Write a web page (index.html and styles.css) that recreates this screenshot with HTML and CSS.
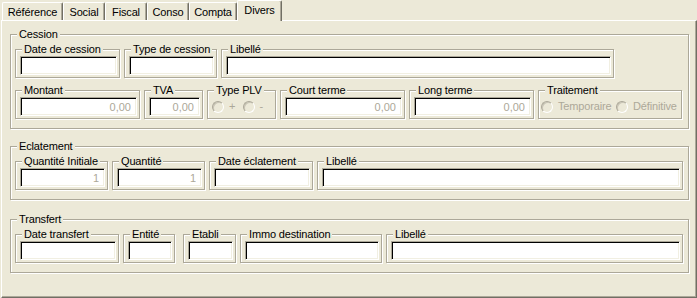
FILE: index.html
```html
<!DOCTYPE html>
<html lang="fr">
<head>
    <meta charset="UTF-8">
    <title>Divers</title>
    <link rel="stylesheet" href="styles.css">
</head>
<body>

    <!-- Tab strip -->
    <div class="tabs">
        <div class="tab t-ref">Référence</div>
        <div class="tab t-social">Social</div>
        <div class="tab t-fiscal">Fiscal</div>
        <div class="tab t-conso">Conso</div>
        <div class="tab t-compta">Compta</div>
        <div class="tab t-divers active">Divers</div>
    </div>

    <div class="panel">
        <!-- Cession -->
        <fieldset class="group">
            <legend>Cession</legend>
            <div class="row">
                <fieldset class="field w-date-cession"><legend>Date de cession</legend><input class="edit" type="text"></fieldset>
                <fieldset class="field w-type-cession"><legend>Type de cession</legend><input class="edit" type="text"></fieldset>
                <fieldset class="field w-lib-cession"><legend>Libellé</legend><input class="edit" type="text"></fieldset>
            </div>
            <div class="row row-next">
                <fieldset class="field w-montant"><legend>Montant</legend><input class="edit num" type="text" value="0,00" disabled></fieldset>
                <fieldset class="field w-tva"><legend>TVA</legend><input class="edit num" type="text" value="0,00" disabled></fieldset>
                <fieldset class="field w-plv">
                    <legend>Type PLV</legend>
                    <div class="radios">
                        <span class="opt opt-plv"><span class="radio"></span>+</span>
                        <span class="opt opt-plv"><span class="radio"></span>-</span>
                    </div>
                </fieldset>
                <fieldset class="field w-court"><legend>Court terme</legend><input class="edit num" type="text" value="0,00" disabled></fieldset>
                <fieldset class="field w-long"><legend>Long terme</legend><input class="edit num" type="text" value="0,00" disabled></fieldset>
                <fieldset class="field w-traitement">
                    <legend>Traitement</legend>
                    <div class="radios traitement">
                        <span class="opt opt-temp"><span class="radio"></span>Temporaire</span>
                        <span class="opt"><span class="radio"></span>Définitive</span>
                    </div>
                </fieldset>
            </div>
        </fieldset>

        <!-- Eclatement -->
        <fieldset class="group g-eclat">
            <legend>Eclatement</legend>
            <div class="row">
                <fieldset class="field w-qte"><legend>Quantité Initiale</legend><input class="edit num" type="text" value="1" disabled></fieldset>
                <fieldset class="field w-qte"><legend>Quantité</legend><input class="edit num" type="text" value="1" disabled></fieldset>
                <fieldset class="field w-date-eclat"><legend>Date éclatement</legend><input class="edit" type="text"></fieldset>
                <fieldset class="field w-lib-eclat"><legend>Libellé</legend><input class="edit" type="text"></fieldset>
            </div>
        </fieldset>

        <!-- Transfert -->
        <fieldset class="group g-transfert">
            <legend>Transfert</legend>
            <div class="row">
                <fieldset class="field w-date-transfert"><legend>Date transfert</legend><input class="edit" type="text"></fieldset>
                <fieldset class="field w-entite"><legend>Entité</legend><input class="edit" type="text"></fieldset>
                <fieldset class="field w-etabli"><legend>Etabli</legend><input class="edit" type="text"></fieldset>
                <fieldset class="field w-immo"><legend>Immo destination</legend><input class="edit" type="text"></fieldset>
                <fieldset class="field w-lib-transfert"><legend>Libellé</legend><input class="edit" type="text"></fieldset>
            </div>
        </fieldset>
    </div>

</body>
</html>
```

FILE: styles.css
```css
body {
    margin: 0;
    background-color: #ECE9D8;
    font-family: "Liberation Sans", Arial, sans-serif;
    font-size: 11px;
    line-height: 13px;
    letter-spacing: -0.15px;
    color: #000;
}

/* Tab strip */
.tabs {
    display: flex;
    align-items: flex-end;
    height: 20px;
    padding-left: 2px;
}
.tab {
    box-sizing: border-box;
    height: 18px;
    padding-top: 3px;
    text-align: center;
    white-space: nowrap;
    border-left: 1px solid #fff;
    border-top: 1px solid #fff;
    border-right: 1px solid #716F64;
    box-shadow: inset -1px 0 #ACA899;
    border-radius: 2px 2px 0 0;
}
.tab.active {
    height: 21px;
    margin-bottom: -1px;
    position: relative;
    z-index: 1;
    background-color: #ECE9D8;
}
.t-ref { width: 61px; }
.t-social, .t-fiscal, .t-conso { width: 42px; }
.t-compta { width: 48px; }
.t-divers { width: 45px; }

/* Tab page */
.panel {
    box-sizing: border-box;
    margin-left: 1px;
    width: 696px;
    height: 278px;
    padding: 7px 7px 0 8px;
    border: 1px solid;
    border-color: #fff #716F64 #716F64 #fff;
    box-shadow: inset -1px -1px #ACA899;
}

/* Etched group boxes */
fieldset {
    margin: 0;
    min-width: 0;
    border: 1px solid #ACA899;
    box-shadow: inset 1px 1px #fff, 1px 1px #fff;
}
legend {
    margin-left: 2px;
    padding: 0 2px;
    line-height: 13px;
    white-space: nowrap;
    color: #000;
    background-color: #ECE9D8;
}
.group {
    padding: 2px 0 9px 4px;
}
.g-eclat { margin-top: 11px; }
.g-transfert { margin-top: 13px; }

.row {
    display: flex;
    gap: 4px;
}
.row-next { margin-top: 6px; }

.field {
    flex-shrink: 0;
    box-sizing: border-box;
    padding: 0 2px 2px 4px;
}

/* field widths */
.w-date-cession { width: 105px; }
.w-type-cession { width: 93px; }
.w-lib-cession { width: 393px; }
.w-montant { width: 125px; }
.w-tva { width: 59px; }
.w-plv { width: 69px; }
.w-court, .w-long { width: 125px; }
.w-traitement { width: 144px; }
.w-qte { width: 93px; }
.w-date-eclat { width: 104px; }
.w-lib-eclat { width: 366px; }
.w-date-transfert { width: 104px; }
.w-entite { width: 52px; }
.w-etabli { width: 53px; margin-left: 4px; }
.w-immo { width: 142px; }
.w-lib-transfert { width: 297px; }

/* Sunken edit boxes */
.edit {
    display: block;
    box-sizing: border-box;
    width: 100%;
    height: 19px;
    margin: 0;
    padding: 0 5px 0 3px;
    font: inherit;
    color: #000;
    background-color: #fff;
    border: 1px solid;
    border-color: #ACA899 #fff #fff #ACA899;
    box-shadow: inset 1px 1px #000, inset -1px -1px #F1EFE2;
    outline: none;
}
.edit.num {
    text-align: right;
}
.edit:disabled {
    color: #ACA899;
    background-color: #fff;
}

/* Disabled radio buttons */
.radios {
    display: flex;
    align-items: center;
    height: 19px;
}
.radios.traitement { margin-left: -2px; }
.opt {
    display: flex;
    align-items: center;
    gap: 5px;
    color: #ACA899;
    white-space: nowrap;
}
.opt-plv { width: 33px; }
.opt-temp { width: 75px; }
.radio {
    box-sizing: border-box;
    width: 12px;
    height: 12px;
    border-radius: 50%;
    border: 1px solid;
    border-color: #ACA899 #fff #fff #ACA899;
    background-color: #ECE9D8;
    box-shadow: inset 1px 1px #C9C5B6;
}
```
